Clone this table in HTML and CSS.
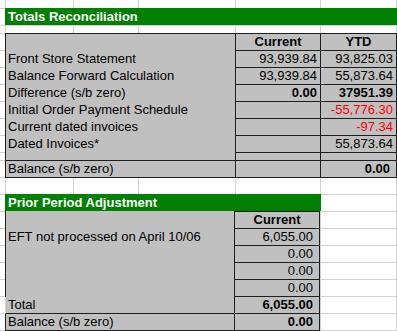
FILE: index.html
```html
<!DOCTYPE html>
<html>
<head>
<meta charset="utf-8">
<link rel="stylesheet" href="styles.css">
</head>
<body>
<div class="sheet">
  <div class="title title-wide">Totals Reconciliation</div>
  <div class="recon">
    <div class="lab"></div><div class="hd">Current</div><div class="hd">YTD</div>
    <div class="lab">Front Store Statement</div><div class="num">93,939.84</div><div class="num">93,825.03</div>
    <div class="lab">Balance Forward Calculation</div><div class="num">93,939.84</div><div class="num">55,873.64</div>
    <div class="lab">Difference (s/b zero)</div><div class="num b">0.00</div><div class="num b">37951.39</div>
    <div class="lab">Initial Order Payment Schedule</div><div class="num"></div><div class="num red">-55,776.30</div>
    <div class="lab">Current dated invoices</div><div class="num"></div><div class="num red">-97.34</div>
    <div class="lab">Dated Invoices*</div><div class="num"></div><div class="num">55,873.64</div>
    <div class="lab lab-close"></div><div class="num"></div><div class="num"></div>
    <div class="lab lab-close">Balance (s/b zero)</div><div class="num"></div><div class="num b wide-pad">0.00</div>
  </div>
  <div class="title title-narrow">Prior Period Adjustment</div>
  <div class="adjust">
    <div class="lab2"></div><div class="hd hd-top">Current</div>
    <div class="lab2">EFT not processed on April 10/06</div><div class="num pad6">6,055.00</div>
    <div class="lab2"></div><div class="num pad6">0.00</div>
    <div class="lab2"></div><div class="num pad6">0.00</div>
    <div class="lab2"></div><div class="num pad6">0.00</div>
    <div class="lab2 lab-open lab-close">Total</div><div class="num b pad6">6,055.00</div>
    <div class="lab2 lab-close">Balance (s/b zero)</div><div class="num b pad6">0.00</div>
  </div>
</div>
</body>
</html>
```
FILE: styles.css
```css
html, body {
  margin: 0;
  padding: 0;
  background: #fff;
}

.sheet {
  width: 397px;
  height: 331px;
  box-sizing: border-box;
  padding: 8px 0 0 5px;
  display: flex;
  flex-direction: column;
  align-items: flex-start;
  overflow: hidden;
  font-family: "Liberation Sans", Arial, sans-serif;
  font-size: 13px;
  color: #000;
  background-color: #fff;
  background-repeat: no-repeat;
  background-image:
    linear-gradient(#d2d2d2, #d2d2d2), linear-gradient(#d2d2d2, #d2d2d2),
    linear-gradient(#d2d2d2, #d2d2d2), linear-gradient(#d2d2d2, #d2d2d2),
    linear-gradient(#d2d2d2, #d2d2d2), linear-gradient(#d2d2d2, #d2d2d2),
    linear-gradient(#d2d2d2, #d2d2d2), linear-gradient(#d2d2d2, #d2d2d2),
    linear-gradient(#d2d2d2, #d2d2d2), linear-gradient(#d2d2d2, #d2d2d2),
    linear-gradient(#d2d2d2, #d2d2d2), linear-gradient(#d2d2d2, #d2d2d2),
    linear-gradient(#d2d2d2, #d2d2d2), linear-gradient(#d2d2d2, #d2d2d2),
    linear-gradient(#d2d2d2, #d2d2d2), linear-gradient(#d2d2d2, #d2d2d2),
    linear-gradient(#d2d2d2, #d2d2d2), linear-gradient(#d2d2d2, #d2d2d2),
    linear-gradient(#d2d2d2, #d2d2d2), linear-gradient(#d2d2d2, #d2d2d2),
    linear-gradient(#d2d2d2, #d2d2d2), linear-gradient(#d2d2d2, #d2d2d2),
    linear-gradient(#d2d2d2, #d2d2d2), linear-gradient(#d2d2d2, #d2d2d2),
    linear-gradient(#d2d2d2, #d2d2d2), linear-gradient(#d2d2d2, #d2d2d2),
    linear-gradient(#d2d2d2, #d2d2d2);
  background-size:
    1px 100%, 1px 100%, 1px 100%, 1px 100%, 1px 100%, 1px 100%,
    100% 1px, 100% 1px, 100% 1px, 100% 1px, 100% 1px, 100% 1px, 100% 1px,
    100% 1px, 100% 1px, 100% 1px, 100% 1px, 100% 1px, 100% 1px, 100% 1px,
    100% 1px, 100% 1px, 100% 1px, 100% 1px, 100% 1px, 100% 1px, 100% 1px;
  background-position:
    5px 0, 73px 0, 138px 0, 235px 0, 320px 0, 396px 0,
    0 8px, 0 25px, 0 33px, 0 50px, 0 67px, 0 84px, 0 101px,
    0 118px, 0 135px, 0 152px, 0 160px, 0 177px, 0 194px, 0 211px,
    0 228px, 0 245px, 0 262px, 0 279px, 0 296px, 0 313px, 0 330px;
}

.title {
  height: 17px;
  line-height: 17px;
  box-sizing: border-box;
  padding-left: 3px;
  background: #008000;
  color: #fff;
  font-weight: bold;
  white-space: nowrap;
}

.title-wide {
  align-self: stretch;
}

.title-narrow {
  width: 316px;
  margin-top: 16px;
}

.recon {
  margin-top: 8px;
  display: grid;
  grid-template-columns: 230px 85px 76px;
  grid-template-rows: repeat(7, 17px) 8px 17px;
  border-top: 1px solid #1e1e1e;
  border-left: 1px solid #1e1e1e;
  background: #c0c0c0;
}

.adjust {
  display: grid;
  grid-template-columns: 230px 85px;
  grid-template-rows: 18px repeat(6, 17px);
}

.lab, .lab2, .num, .hd {
  box-sizing: border-box;
  line-height: 16px;
  white-space: nowrap;
  overflow: visible;
}

.lab {
  border-right: 1px solid #1e1e1e;
  padding-left: 2px;
}

.lab2 {
  background: #c0c0c0;
  background-clip: padding-box;
  border-left: 1px solid #1e1e1e;
  border-right: 1px solid #1e1e1e;
  padding-left: 2px;
}

.lab-open {
  border-left-color: transparent;
}

.lab-close {
  border-bottom: 1px solid #1e1e1e;
}

.num, .hd {
  background: #c0c0c0;
  border-right: 1px solid #1e1e1e;
  border-bottom: 1px solid #1e1e1e;
}

.num {
  text-align: right;
  padding-right: 3px;
}

.hd {
  text-align: center;
  font-weight: bold;
}

.hd-top {
  border-top: 1px solid #1e1e1e;
}

.b {
  font-weight: bold;
}

.red {
  color: #ff0000;
}

.wide-pad {
  padding-right: 6px;
}

.pad6 {
  padding-right: 6px;
}
```
